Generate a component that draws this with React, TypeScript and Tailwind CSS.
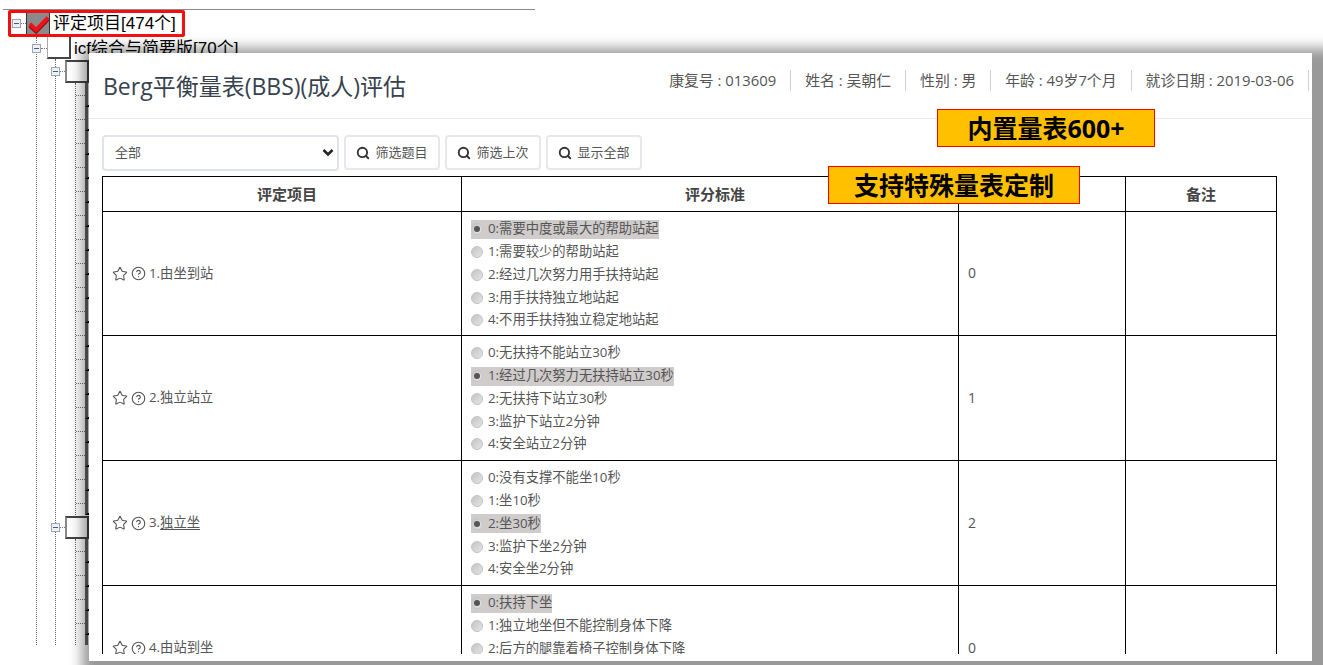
import React from 'react';
import { Search, Star, CircleHelp } from 'lucide-react';

const FONT = "font-['Open_Sans','Noto_Sans_CJK_SC',sans-serif]";
const TREE_FONT = "font-['Liberation_Sans','Noto_Sans_CJK_SC',sans-serif]";

const items = [
  { no: '1.', name: '由坐到站', score: '0', selected: 0, options: ['0:需要中度或最大的帮助站起', '1:需要较少的帮助站起', '2:经过几次努力用手扶持站起', '3:用手扶持独立地站起', '4:不用手扶持独立稳定地站起'] },
  { no: '2.', name: '独立站立', score: '1', selected: 1, options: ['0:无扶持不能站立30秒', '1:经过几次努力无扶持站立30秒', '2:无扶持下站立30秒', '3:监护下站立2分钟', '4:安全站立2分钟'] },
  { no: '3.', name: '独立坐', score: '2', selected: 2, underline: true, options: ['0:没有支撑不能坐10秒', '1:坐10秒', '2:坐30秒', '3:监护下坐2分钟', '4:安全坐2分钟'] },
  { no: '4.', name: '由站到坐', score: '0', selected: 0, options: ['0:扶持下坐', '1:独立地坐但不能控制身体下降', '2:后方的腿靠着椅子控制身体下降'] },
];

const patient = ['康复号 : 013609', '姓名 : 吴朝仁', '性别 : 男', '年龄 : 49岁7个月', '就诊日期 : 2019-03-06'];

const Expander = () => (
  <div className="w-[9px] h-[9px] border border-[#9aa5b5] bg-[#eef0f4] flex items-center justify-center shrink-0">
    <div className="w-[5px] h-px bg-[#4a5a78]" />
  </div>
);

const Dots = ({ width }: { width: string }) => (
  <div className={`${width} shrink-0 border-t border-dotted border-[#777]`} />
);

const TreeBox = () => (
  <div className="w-[24px] h-[23px] bg-white border-2 border-[#444] border-l-[#888] shrink-0" />
);

// 第三层节点：展开按钮 + 复选框
const BranchNode = () => (
  <div className="flex items-center h-[24px] -ml-[5px]">
    <Expander />
    <Dots width="w-[5px]" />
    <TreeBox />
  </div>
);

// 第四层叶子行，复选框的左缘露在弹窗阴影下面
const LeafRows = ({ count, className = '' }: { count: number; className?: string }) => (
  <div className={`ml-[19px] border-l border-dotted border-[#666] flex flex-col ${className}`}>
    {Array.from({ length: count }).map((_, i) => (
      <div key={i} className="h-[24px] shrink-0 flex items-center">
        <Dots width="w-[9px]" />
        <div className="w-[20px] h-[24px] border-l-[3px] border-b-2 border-l-[#666] border-b-black shrink-0" />
      </div>
    ))}
  </div>
);

const Radio = ({ on }: { on: boolean }) => (
  <span className="w-[12px] h-[12px] rounded-full bg-gradient-to-br from-[#c4c4c4] to-[#e4e4e4] border border-[#c4c4c4] flex items-center justify-center shrink-0">
    {on && <span className="w-[6px] h-[6px] rounded-full bg-[#555]" />}
  </span>
);

const FilterButton = ({ label }: { label: string }) => (
  <button className="h-[35px] w-[96px] flex items-center justify-center gap-[5px] bg-white border-2 border-[#e6e8ec] rounded-[4px] text-[13px] text-[#555]">
    <Search size={14} strokeWidth={3.2} className="text-[#333]" />
    {label}
  </button>
);

export default function App() {
  return (
    <div className={`relative w-[1323px] h-[665px] overflow-hidden bg-white ${FONT}`}>
      {/* 背后的评定项目树 */}
      <div className={`w-[532px] ml-[3px] mt-[9px] border-t border-[#8a8a8a] ${TREE_FONT}`}>
        <div className="flex items-center h-[27px] ml-[9px]">
          <Expander />
          <Dots width="w-[5px]" />
          <div className="w-[24px] h-[24px] bg-[#8a8a8a] border border-[#333] flex items-center justify-center shrink-0">
            <svg width="24" height="24" viewBox="0 0 24 24">
              <path d="M3 13 L10 19.5 L23 6" fill="none" stroke="#8f0d12" strokeWidth="4" transform="translate(0 1)" />
              <path d="M3 12 L10 18.5 L23 5" fill="none" stroke="#f01018" strokeWidth="4.5" />
            </svg>
          </div>
          <span className="ml-[3px] text-[17px] leading-none text-black">评定项目[474个]</span>
        </div>
        <div className="ml-[33px] w-[60px] h-[608px] border-l border-dotted border-[#666] flex flex-col">
          <div className="flex items-center h-[22px] -ml-[5px]">
            <Expander />
            <Dots width="w-[6px]" />
            <div className="w-[24px] h-[22px] bg-white border-b-2 border-r-2 border-l border-[#444] border-l-[#aaa] shrink-0" />
            <span className="ml-[3px] text-[17px] leading-none text-black whitespace-nowrap">icf综合与简要版[70个]</span>
          </div>
          <div className="ml-[18px] h-[586px] border-l border-dotted border-[#666] flex flex-col">
            <BranchNode />
            <LeafRows count={18} />
            <BranchNode />
            <LeafRows count={5} className="h-[106px] overflow-hidden" />
          </div>
        </div>
      </div>

      {/* 弹窗 */}
      <div className="absolute left-[89px] top-[53px] w-[1223px] h-[608px] bg-white shadow-[10px_12px_12px_17px_rgba(0,0,0,0.4)]">
        <div className="h-[66px] flex items-center justify-between border-b border-[#e8e9eb] pl-[14px]">
          <h1 className="text-[23px] leading-none text-[#37424e] mt-[1px]">Berg平衡量表(BBS)(成人)评估</h1>
          <div className="flex items-center mt-[-10px] mr-[3px]">
            {patient.map((p, i) => (
              <div key={i} className="h-[21px] px-[14px] border-r border-[#c9d3de] text-[14.85px] leading-[21px] text-[#555] whitespace-nowrap">{p}</div>
            ))}
          </div>
        </div>
        <div className="h-[535px] overflow-hidden pl-[13px] pt-[15px]">
          <div className="flex items-center gap-[5px] h-[37px]">
            <div className="w-[237px] h-[36px] border-2 border-[#e0e4ea] rounded-[4px] pl-[11px] pr-[3px] flex items-center justify-between text-[13px] text-[#555]">
              全部
              <svg width="12" height="9" viewBox="0 0 12 9"><path d="M1.5 2 L6 6.5 L10.5 2" fill="none" stroke="#222" strokeWidth="2.6" /></svg>
            </div>
            <FilterButton label="筛选题目" />
            <FilterButton label="筛选上次" />
            <FilterButton label="显示全部" />
          </div>
          <table className="mt-[5px] w-[1174px] table-fixed border-collapse text-[13.3px] text-[#555]">
            <colgroup>
              <col className="w-[359px]" />
              <col className="w-[497px]" />
              <col className="w-[167px]" />
              <col className="w-[151px]" />
            </colgroup>
            <thead>
              <tr className="h-[35px] text-[15px] text-[#444]">
                <th className="border border-black font-semibold pl-[10px]">评定项目</th>
                <th className="border border-black font-semibold pl-[10px]">评分标准</th>
                <th className="border border-black font-semibold" />
                <th className="border border-black font-semibold">备注</th>
              </tr>
            </thead>
            <tbody>
              {items.map((item, idx) => (
                <tr key={item.no} className={idx === 0 ? 'h-[124px]' : 'h-[125px]'}>
                  <td className="border border-black pl-[9px]">
                    <div className="flex items-center gap-[3px]">
                      <Star size={16} strokeWidth={1.6} />
                      <CircleHelp size={15} strokeWidth={1.8} />
                      <span>
                        {item.no}
                        <span className={item.underline ? 'underline underline-offset-2' : ''}>{item.name}</span>
                      </span>
                    </div>
                  </td>
                  <td className="border border-black pl-[9px] align-top pt-[6px]">
                    {item.options.map((o, i) => (
                      <div key={o} className="h-[22.75px] flex items-center">
                        <span className={`h-[19px] flex items-center gap-[5px] ${i === item.selected ? 'bg-[#cfcccb]' : ''}`}>
                          <Radio on={i === item.selected} />
                          {o}
                        </span>
                      </div>
                    ))}
                  </td>
                  <td className="border border-black pl-[9px] text-[14px] pb-[2px]">{item.score}</td>
                  <td className="border border-black" />
                </tr>
              ))}
            </tbody>
          </table>
        </div>
      </div>

      {/* 标注 */}
      <div className="absolute left-[937px] top-[109px] w-[218px] h-[38px] bg-[#ffc000] border border-[#ff0000] flex items-center justify-center text-[25px] font-bold text-black leading-none">内置量表600+</div>
      <div className="absolute left-[828px] top-[166px] w-[252px] h-[38px] bg-[#ffc000] border border-[#ff0000] flex items-center justify-center text-[25px] font-bold text-black leading-none">支持特殊量表定制</div>

      {/* 根节点红框 */}
      <div className="absolute left-[8px] top-[10px] w-[177px] h-[27px] border-[3px] border-[#f01010] rounded-[2px]" />
    </div>
  );
}
